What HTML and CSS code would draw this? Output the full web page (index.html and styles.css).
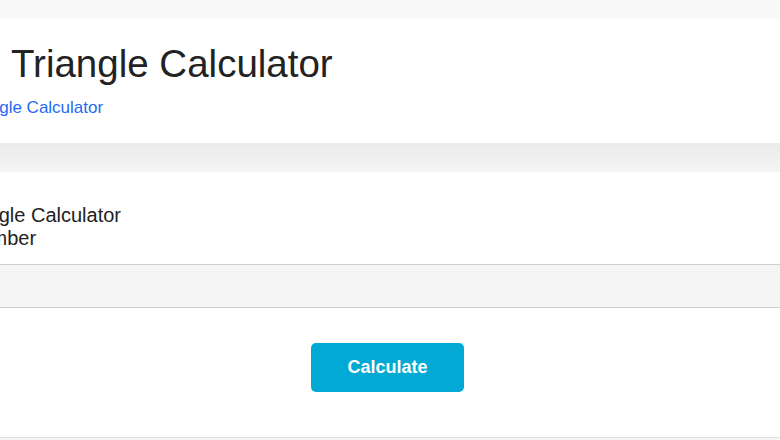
FILE: index.html
```html
<!DOCTYPE html>
<html lang="en">
<head>
  <meta charset="UTF-8" />
  <meta name="viewport" content="width=device-width, initial-scale=1.0"/>
  <title>Right Triangle Calculator</title>
  <link rel="stylesheet" href="styles.css">
</head>
<body>
  <div class="page">
    <div class="topbar"></div>

    <header class="page-head">
      <h1 class="title">Triangle Calculator</h1>
      <a class="crumb" href="#">Right Triangle Calculator</a>
    </header>

    <div class="divider"></div>

    <section class="calc">
      <div class="calc-label">
        <div class="calc-name">Right Triangle Calculator</div>
        <div class="calc-hint">Number</div>
      </div>
      <div class="calc-input"></div>
      <div class="calc-actions">
        <button class="btn-calc" type="button">Calculate</button>
      </div>
    </section>

    <footer class="page-foot"></footer>
  </div>
</body>
</html>
```

FILE: styles.css
```css
* {
  box-sizing: border-box;
}
body {
  margin: 0;
  background-color: #fff;
  font-family: 'Liberation Sans', Arial, sans-serif;
  color: #222;
  overflow: hidden;
}
.page {
  width: 780px;
  height: 440px;
  overflow: hidden;
}
.topbar {
  height: 19px;
  background-color: #f9f9f9;
}
.page-head {
  padding: 24px 0 25px 11px;
}
.title {
  margin: 0;
  font-size: 38.5px;
  line-height: 42px;
  font-weight: normal;
  color: #222;
}
.crumb {
  display: block;
  margin: 13px 0 0 -94px;
  font-size: 17px;
  line-height: 20px;
  color: #1f6af5;
  text-decoration: none;
  white-space: nowrap;
}
.divider {
  height: 29px;
  background: linear-gradient(#ebebeb, #f4f4f4);
}
.calc-label {
  padding: 32px 0 14px 0;
  font-size: 20px;
  line-height: 23px;
  white-space: nowrap;
}
.calc-name {
  margin-left: -98px;
}
.calc-hint {
  margin-left: -35px;
}
.calc-input {
  height: 44px;
  background-color: #f5f5f5;
  border-top: 1px solid #cfcfcf;
  border-bottom: 1px solid #cfcfcf;
}
.calc-actions {
  display: flex;
  justify-content: center;
  padding: 35px 5px 45px 0;
}
.btn-calc {
  width: 153px;
  height: 49px;
  border: none;
  border-radius: 5px;
  background-color: #02a9d5;
  color: #fff;
  font-family: 'Liberation Sans', Arial, sans-serif;
  font-size: 18px;
  font-weight: bold;
  cursor: pointer;
}
.page-foot {
  height: 4px;
  border-top: 1px solid #dedede;
  background-color: #f6f6f6;
}
```
